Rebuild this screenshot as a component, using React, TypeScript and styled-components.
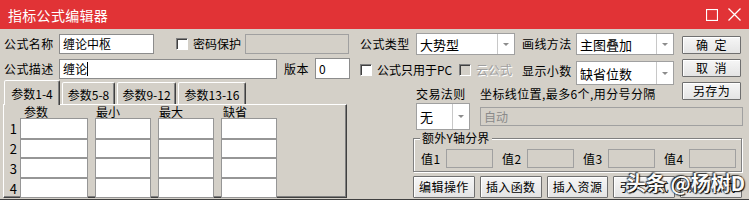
import { Fragment } from "react";
import styled, { createGlobalStyle } from "styled-components";

const GlobalStyle = createGlobalStyle`
  html, body {
    margin: 0;
    padding: 0;
  }
  body {
    background: #d4d0c8;
    font-family: "Noto Sans CJK SC", "Noto Sans", sans-serif;
    font-size: 12px;
    color: #000;
  }
`;

const Window = styled.div`
  position: relative;
  width: 749px;
  height: 200px;
  box-sizing: border-box;
  background: #d4d0c8;
  border-bottom: 1px solid #404040;
  overflow: hidden;
`;

const TitleBar = styled.div`
  height: 29px;
  display: flex;
  align-items: center;
  justify-content: space-between;
  padding: 0 8px;
  background: #e13336;
  color: #fff;
  font-size: 14px;
  letter-spacing: 0.3px;
`;

const TitleButtons = styled.div`
  display: flex;
  align-items: center;
  gap: 10px;
`;

const Body = styled.div`
  display: flex;
`;

const LeftCol = styled.div`
  margin-left: 3px;
  width: 347px;
  display: flex;
  flex-direction: column;
`;

const RightCol = styled.div`
  margin-left: 10px;
  width: 385px;
  display: flex;
  flex-direction: column;
`;

const Row = styled.div<{ $top: number; $h: number; $align?: string }>`
  display: flex;
  align-items: ${({ $align }) => $align || "center"};
  margin-top: ${({ $top }) => $top}px;
  height: ${({ $h }) => $h}px;
`;

const Label = styled.span<{ $w?: number; $ml?: number; $mt?: number }>`
  flex-shrink: 0;
  width: ${({ $w }) => ($w ? `${$w}px` : "auto")};
  margin-left: ${({ $ml }) => $ml || 0}px;
  margin-top: ${({ $mt }) => $mt || 0}px;
  line-height: 14px;
  white-space: nowrap;
  letter-spacing: 0.4px;
`;

const TextBox = styled.div<{
  $w: number;
  $h: number;
  $ml?: number;
  $mt?: number;
  $disabled?: boolean;
}>`
  flex-shrink: 0;
  box-sizing: border-box;
  width: ${({ $w }) => $w}px;
  height: ${({ $h }) => $h}px;
  margin-left: ${({ $ml }) => $ml || 0}px;
  margin-top: ${({ $mt }) => $mt || 0}px;
  padding: 0 3px;
  display: flex;
  align-items: center;
  border: 1px solid ${({ $disabled }) => ($disabled ? "#a0a0a0" : "#8c8c8c")};
  background: ${({ $disabled }) => ($disabled ? "#d4d0c8" : "#fff")};
  color: ${({ $disabled }) => ($disabled ? "#8a8a8a" : "#000")};
  line-height: 14px;
  white-space: nowrap;
`;

const Caret = styled.span`
  display: inline-block;
  width: 1px;
  height: 14px;
  background: #000;
`;

const CheckItem = styled.label<{ $w: number; $ml?: number; $mt?: number; $disabled?: boolean }>`
  flex-shrink: 0;
  width: ${({ $w }) => $w}px;
  margin-left: ${({ $ml }) => $ml || 0}px;
  margin-top: ${({ $mt }) => $mt || 0}px;
  display: flex;
  align-items: center;
  gap: 5px;
  line-height: 14px;
  white-space: nowrap;
  color: ${({ $disabled }) => ($disabled ? "#a0a0a0" : "#000")};
  text-shadow: ${({ $disabled }) => ($disabled ? "1px 1px 0 #fff" : "none")};
`;

const CheckBox = styled.span<{ $disabled?: boolean }>`
  flex-shrink: 0;
  box-sizing: border-box;
  width: 12px;
  height: 12px;
  border: 1px solid;
  border-color: #808080 #fff #fff #808080;
  box-shadow: inset 1px 1px 0 #404040;
  background: ${({ $disabled }) => ($disabled ? "#d4d0c8" : "#fff")};
`;

const Combo = styled.div<{ $w: number; $h: number; $ml?: number }>`
  flex-shrink: 0;
  box-sizing: border-box;
  width: ${({ $w }) => $w}px;
  height: ${({ $h }) => $h}px;
  margin-left: ${({ $ml }) => $ml || 0}px;
  display: flex;
  border: 1px solid #a0a0a0;
  background: #fff;
`;

const ComboText = styled.span`
  flex: 1;
  display: flex;
  align-items: center;
  padding-left: 3px;
  font-size: 13px;
  white-space: nowrap;
`;

const ComboArrow = styled.span`
  width: 16px;
  display: flex;
  align-items: center;
  justify-content: center;
  border-left: 1px solid #c8c8c8;

  &::after {
    content: "";
    border-left: 3px solid transparent;
    border-right: 3px solid transparent;
    border-top: 3px solid #8c8c8c;
  }
`;

const Button = styled.button<{ $h: number }>`
  box-sizing: border-box;
  height: ${({ $h }) => $h}px;
  padding: 0;
  border: 1px solid #6f6f6f;
  border-radius: 1px;
  background: linear-gradient(#f6f6f6, #e4e4e4);
  box-shadow: inset 1px 1px 0 #fff;
  font-family: inherit;
  font-size: 12px;
  color: #000;
  line-height: 14px;
  white-space: pre;
  letter-spacing: 0.4px;
`;

const TopArea = styled.div`
  display: flex;
`;

const FieldsBlock = styled.div`
  width: 314px;
  display: flex;
  flex-direction: column;
`;

const ButtonCol = styled.div`
  margin-left: 8px;
  width: 59px;
  padding-top: 7px;
  display: flex;
  flex-direction: column;
  gap: 5px;
`;

const TabStrip = styled.div`
  height: 24px;
  display: flex;
  align-items: flex-end;
  gap: 2px;
  padding-left: 1px;
`;

const Tab = styled.div<{ $w: number; $active?: boolean }>`
  position: relative;
  z-index: ${({ $active }) => ($active ? 2 : 1)};
  box-sizing: border-box;
  width: ${({ $w }) => $w}px;
  height: ${({ $active }) => ($active ? 25 : 22)}px;
  margin-bottom: ${({ $active }) => ($active ? -1 : 0)}px;
  display: flex;
  align-items: center;
  justify-content: center;
  border: 1px solid;
  border-bottom: none;
  border-color: #fff #404040 transparent #fff;
  box-shadow: inset -1px 0 0 #808080;
  border-radius: 2px 2px 0 0;
  background: #d4d0c8;
  white-space: nowrap;
  padding-top: ${({ $active }) => ($active ? 0 : 1)}px;
`;

const Panel = styled.div`
  box-sizing: border-box;
  width: 344px;
  height: 94px;
  border-top: 1px solid #fff;
  border-left: 1px solid #fff;
  border-right: 1px solid #404040;
  border-bottom: 1px solid #404040;
  box-shadow: inset -1px -1px 0 #808080;
  display: grid;
  grid-template-columns: 16px 75px 63px 63px 56px;
  grid-template-rows: 13px 21px 19px 20px 20px;
`;

const ColHead = styled.span<{ $indent?: number }>`
  align-self: end;
  padding-left: ${({ $indent }) => $indent ?? 1}px;
  line-height: 13px;
  white-space: nowrap;
`;

const RowNum = styled.span`
  display: flex;
  align-items: center;
  justify-content: flex-end;
  padding-right: 3px;
  font-size: 13px;
`;

const Cell = styled.div<{ $w: number }>`
  box-sizing: border-box;
  width: ${({ $w }) => $w}px;
  height: 100%;
  border: 1px solid #969696;
  background: #fff;
`;

const LowerArea = styled.div`
  padding-left: 53px;
  display: flex;
  flex-direction: column;
`;

const GroupBox = styled.fieldset`
  box-sizing: border-box;
  width: 329px;
  margin: 1px 0 0 0;
  padding: 0;
  border: 1px solid #808080;
  box-shadow: inset 1px 1px 0 #fff, 1px 1px 0 #fff;
`;

const Legend = styled.legend`
  margin-left: 6px;
  padding: 0 2px;
  line-height: 14px;
  background: #d4d0c8;
  letter-spacing: 0.2px;
`;

const ValuesRow = styled.div`
  display: flex;
  gap: 9px;
  padding: 4px 0 3px 7px;
`;

const ValueItem = styled.div`
  display: flex;
  align-items: center;
`;

const ActionRow = styled.div`
  margin-top: 4px;
  width: 329px;
  display: grid;
  grid-template-columns: repeat(5, 1fr);
  gap: 5px;
`;

const Watermark = styled.div`
  position: absolute;
  right: 4px;
  bottom: 4px;
  font-size: 20px;
  font-weight: 700;
  line-height: 24px;
  color: #fff;
  text-shadow: 0 0 2px #000, 1px 1px 1px #000, -1px -1px 1px #333;
  white-space: nowrap;
  opacity: 0.9;
`;

function MaxIcon() {
  return (
    <svg width="12" height="12" viewBox="0 0 12 12">
      <rect x="0.5" y="0.5" width="11" height="11" fill="none" stroke="#fff" strokeWidth="1.2" />
    </svg>
  );
}

function CloseIcon() {
  return (
    <svg width="13" height="13" viewBox="0 0 13 13">
      <path d="M0.5 0.5 L12.5 12.5 M12.5 0.5 L0.5 12.5" stroke="#fff" strokeWidth="1.3" />
    </svg>
  );
}

const tabs = [
  { label: "参数1-4", w: 56, active: true },
  { label: "参数5-8", w: 53 },
  { label: "参数9-12", w: 59 },
  { label: "参数13-16", w: 68 },
];

const values = ["值1", "值2", "值3", "值4"];
const actions = ["编辑操作", "插入函数", "插入资源", "引入公式", "测试公式"];

export default function App() {
  return (
    <Window>
      <GlobalStyle />
      <TitleBar>
        <span>指标公式编辑器</span>
        <TitleButtons>
          <MaxIcon />
          <CloseIcon />
        </TitleButtons>
      </TitleBar>
      <Body>
        <LeftCol>
          <Row $top={4} $h={21}>
            <Label $w={55} $ml={1}>公式名称</Label>
            <TextBox $w={95} $h={20}>缠论中枢</TextBox>
            <CheckItem $w={69} $ml={22}>
              <CheckBox />
              密码保护
            </CheckItem>
            <TextBox $w={104} $h={20} $disabled />
          </Row>
          <Row $top={3} $h={23}>
            <Label $w={55} $ml={1}>公式描述</Label>
            <TextBox $w={218} $h={20}>
              缠论
              <Caret />
            </TextBox>
            <Label $ml={7} $w={31}>版本</Label>
            <TextBox $w={35} $h={21}>0</TextBox>
          </Row>
          <TabStrip>
            {tabs.map((t) => (
              <Tab key={t.label} $w={t.w} $active={t.active}>
                {t.label}
              </Tab>
            ))}
          </TabStrip>
          <Panel>
            <span />
            <ColHead $indent={4}>参数</ColHead>
            <ColHead>最小</ColHead>
            <ColHead>最大</ColHead>
            <ColHead $indent={2}>缺省</ColHead>
            {[1, 2, 3, 4].map((n) => (
              <Fragment key={n}>
                <RowNum>{n}</RowNum>
                <Cell $w={68} />
                <Cell $w={56} />
                <Cell $w={56} />
                <Cell $w={56} />
              </Fragment>
            ))}
          </Panel>
        </LeftCol>
        <RightCol>
          <TopArea>
            <FieldsBlock>
              <Row $top={4} $h={22}>
                <Label $w={56}>公式类型</Label>
                <Combo $w={99} $h={22}>
                  <ComboText>大势型</ComboText>
                  <ComboArrow />
                </Combo>
                <Label $w={54} $ml={7}>画线方法</Label>
                <Combo $w={98} $h={22}>
                  <ComboText>主图叠加</ComboText>
                  <ComboArrow />
                </Combo>
              </Row>
              <Row $top={6} $h={24} $align="flex-start">
                <CheckItem $w={99} $mt={2}>
                  <CheckBox />
                  公式只用于PC
                </CheckItem>
                <CheckItem $w={63} $mt={2} $disabled>
                  <CheckBox $disabled />
                  云公式
                </CheckItem>
                <Label $w={54} $mt={3}>显示小数</Label>
                <Combo $w={98} $h={24}>
                  <ComboText>缺省位数</ComboText>
                  <ComboArrow />
                </Combo>
              </Row>
              <Row $top={2} $h={14}>
                <Label $w={64} $ml={56}>交易法则</Label>
                <Label>坐标线位置,最多6个,用分号分隔</Label>
              </Row>
            </FieldsBlock>
            <ButtonCol>
              <Button $h={18}>{"确  定"}</Button>
              <Button $h={18}>{"取  消"}</Button>
              <Button $h={18}>另存为</Button>
            </ButtonCol>
          </TopArea>
          <LowerArea>
            <Row $top={2} $h={27} $align="flex-start">
              <Combo $w={54} $h={27} $ml={3}>
                <ComboText>无</ComboText>
                <ComboArrow />
              </Combo>
              <TextBox $w={263} $h={19} $ml={10} $mt={4} $disabled>
                自动
              </TextBox>
            </Row>
            <GroupBox>
              <Legend>额外Y轴分界</Legend>
              <ValuesRow>
                {values.map((v) => (
                  <ValueItem key={v}>
                    <Label $w={25}>{v}</Label>
                    <TextBox $w={47} $h={19} $disabled />
                  </ValueItem>
                ))}
              </ValuesRow>
            </GroupBox>
            <ActionRow>
              {actions.map((a) => (
                <Button key={a} $h={22}>
                  {a}
                </Button>
              ))}
            </ActionRow>
          </LowerArea>
        </RightCol>
      </Body>
      <Watermark>头条 @杨树D</Watermark>
    </Window>
  );
}
